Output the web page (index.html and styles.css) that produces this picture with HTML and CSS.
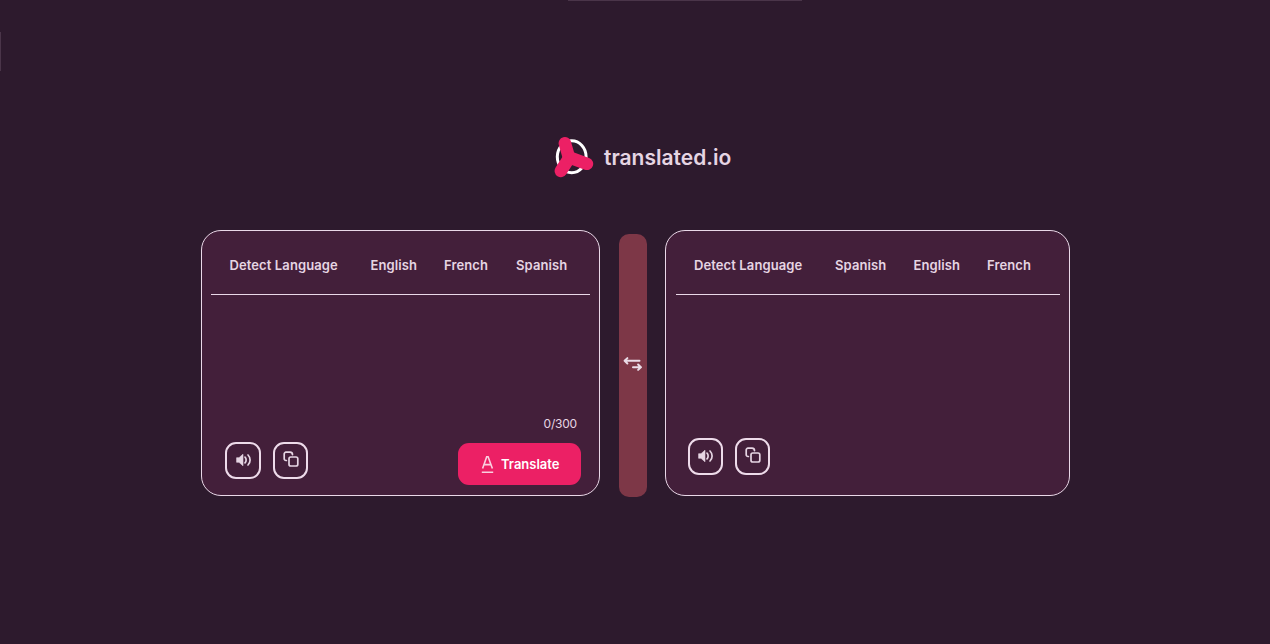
FILE: index.html
```html
<!DOCTYPE html>
<html lang="en">
<head>
<meta charset="utf-8">
<title>translated.io</title>
<link rel="stylesheet" href="styles.css">
</head>
<body>
<svg class="defs" width="0" height="0" aria-hidden="true">
  <symbol id="sound" viewBox="0 0 16 14">
    <path d="M0.6 4.7H3L7 1.2V12.8L3 9.3H0.6Z" fill="currentColor" stroke="currentColor" stroke-width=".6" stroke-linejoin="round"/>
    <path d="M9 4.1C10.5 5.6 10.5 8.4 9 9.9M12 2C14.8 4.6 14.8 9.4 12 12" fill="none" stroke="currentColor" stroke-width="1.7" stroke-linecap="round"/>
  </symbol>
  <symbol id="copy" viewBox="0 0 16 16">
    <path d="M3.4 9.5H3A1.8 1.8 0 0 1 1.2 7.7V3A1.8 1.8 0 0 1 3 1.2H7A2.5 2.5 0 0 1 9.5 3.6" fill="none" stroke="currentColor" stroke-width="1.7" stroke-linecap="round"/>
    <rect x="6" y="6" width="8.8" height="9" rx="1.8" fill="none" stroke="currentColor" stroke-width="1.7"/>
  </symbol>
</svg>
<i class="edge edge-top"></i>
<i class="edge edge-left"></i>
<main class="page">
  <header class="brand">
    <svg class="brand-mark" width="40" height="42" viewBox="0 0 40 42">
      <ellipse cx="17.7" cy="20.7" rx="14.4" ry="16" fill="none" stroke="#fff" stroke-width="3"/>
      <g fill="none" stroke="#ec2065" stroke-width="12.6" stroke-linecap="round">
        <path d="M10.9 7.2L14.4 19.5"/>
        <path d="M6.9 34.9L14.6 23"/>
        <path d="M32.9 27.8L18 22.3"/>
      </g>
    </svg>
    <span class="brand-name">translated.io</span>
  </header>
  <div class="translator">
    <section class="card source">
      <nav class="tabs">
        <span class="tab detect">Detect Language</span>
        <span class="tab english">English</span>
        <span class="tab french">French</span>
        <span class="tab spanish">Spanish</span>
      </nav>
      <div class="text-area"><span class="count">0/300</span></div>
      <footer class="actions">
        <button class="tool"><svg class="sound" width="16" height="14"><use href="#sound"/></svg></button>
        <button class="tool"><svg class="copy" width="16" height="16"><use href="#copy"/></svg></button>
        <button class="translate">
          <svg width="13" height="19" viewBox="0 0 13 19" fill="none" stroke="#f9cfe0" stroke-width="1.6"><path d="M1.6 13.6L5.7 1.8H7.1L11.4 13.6M3 9.6H10M.8 17.2H12.2"/></svg>
          <span>Translate</span>
        </button>
      </footer>
    </section>
    <button class="swap">
      <svg width="20" height="16" viewBox="0 0 20 16" fill="none" stroke="#eadce7" stroke-width="2" stroke-linecap="round" stroke-linejoin="round"><path d="M16.5 4.8H2M4.4 2.1L1.6 4.8L4.4 7.5M10 11.2H18M15.1 8.5L17.9 11.2L15.1 13.9"/></svg>
    </button>
    <section class="card target">
      <nav class="tabs">
        <span class="tab detect">Detect Language</span>
        <span class="tab spanish">Spanish</span>
        <span class="tab english">English</span>
        <span class="tab french">French</span>
      </nav>
      <div class="text-area"></div>
      <footer class="actions">
        <button class="tool"><svg class="sound" width="16" height="14"><use href="#sound"/></svg></button>
        <button class="tool"><svg class="copy" width="16" height="16"><use href="#copy"/></svg></button>
      </footer>
    </section>
  </div>
</main>
</body>
</html>
```

FILE: styles.css
```css
* { box-sizing: border-box; }
body {
  margin: 0;
  height: 644px;
  overflow: hidden;
  background: #2d1a2d;
  color: #e6d5e3;
  font-family: Inter, "Liberation Sans", sans-serif;
}
button { margin: 0; padding: 0; border: 0; color: inherit; font: inherit; }
svg { display: block; flex: none; }
.defs { position: absolute; }
.edge { position: absolute; background: #4a3549; }
.edge-top { left: 568px; top: 0; width: 234px; height: 1px; }
.edge-left { left: 0; top: 32px; width: 1px; height: 39px; }
.page { padding-top: 136px; }
.brand {
  display: flex;
  align-items: center;
  gap: 10px;
  height: 42px;
  margin-left: 554px;
}
.brand-name { padding-top: 2px; font-size: 21px; font-weight: 600; line-height: 28px; white-space: nowrap; }
.translator { display: flex; margin: 52px 0 0 201px; }
.card {
  display: flex;
  flex-direction: column;
  height: 266px;
  border: 1px solid #ead8e8;
  border-radius: 20px;
  background: #431f3a;
}
.source { width: 399px; padding: 0 9px; }
.target { width: 405px; padding: 0 9px 0 10px; margin-left: 18px; }
.tabs {
  display: flex;
  height: 64px;
  padding: 24px 0 0 18.5px;
  border-bottom: 1px solid #ead8e8;
  font-size: 13px;
  font-weight: 600;
  line-height: 20px;
  letter-spacing: 0.1px;
}
.target .tabs { padding-left: 18px; }
.tab { flex: none; white-space: nowrap; }
.detect { width: 141px; }
.english { width: 73.5px; }
.french { width: 72px; }
.spanish { width: 78.5px; }
.source .text-area { height: 147px; }
.target .text-area { height: 143px; }
.text-area { display: flex; align-items: flex-end; justify-content: flex-end; }
.count { padding-right: 13px; margin-bottom: 10px; font-size: 12px; line-height: 16px; letter-spacing: -0.2px; }
.actions { display: flex; gap: 12px; padding-left: 14px; }
.source .actions { padding-right: 9px; }
.target .actions { padding-left: 12px; }
.tool {
  display: flex;
  align-items: center;
  justify-content: center;
  width: 36px;
  height: 37px;
  border: 2px solid #eedbea;
  border-radius: 11px;
  background: transparent;
}
.tool + .tool { width: 35px; }
.target .tool { width: 35px; }
.sound { margin: -1px 0 0 1px; }
.copy { margin-top: -3px; }
.translate {
  display: flex;
  align-items: center;
  gap: 7px;
  width: 123px;
  height: 42px;
  margin: 1px 0 0 auto;
  padding-left: 23px;
  border-radius: 11px;
  background: #ec2065;
  color: #fff;
  font-size: 13px;
  font-weight: 600;
}
.swap {
  display: flex;
  align-items: center;
  justify-content: center;
  width: 28px;
  height: 263px;
  margin: 4px 0 0 19px;
  padding-bottom: 4px;
  border-radius: 10px;
  background: #7d3747;
}
```
